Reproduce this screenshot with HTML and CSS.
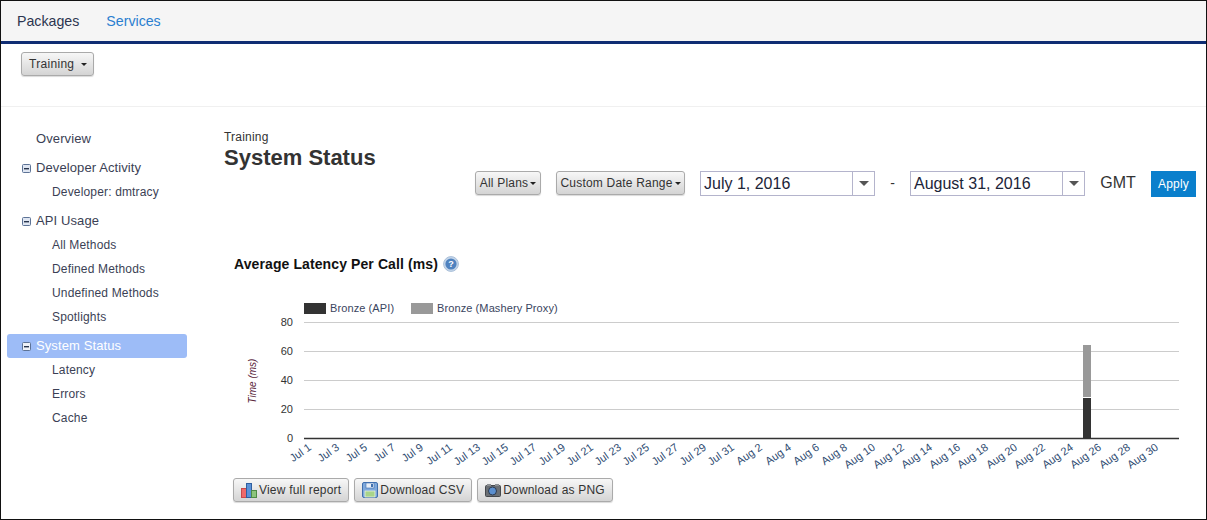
FILE: index.html
```html
<!DOCTYPE html>
<html lang="en">
<head>
    <meta charset="UTF-8">
    <title>System Status</title>
    <link rel="stylesheet" href="styles.css">
</head>
<body>
    <div class="frame">
        <!-- Top nav -->
        <nav class="top-nav">
            <a class="top-link" href="#">Packages</a>
            <a class="top-link active" href="#">Services</a>
        </nav>

        <div class="area-bar">
            <button class="btn btn-area">Training <span class="caret"></span></button>
        </div>

        <div class="page">
            <!-- Sidebar -->
            <ul class="side-nav">
                <li class="side-item plain">Overview</li>
                <li class="side-item group"><svg class="minus-box" viewBox="0 0 9 9"><rect x="0.5" y="0.5" width="8" height="8" rx="1" fill="#dfe6f2" stroke="#5d7396"/><rect x="2" y="4" width="5" height="1.4" fill="#28354d"/></svg>Developer Activity</li>
                <li class="side-sub">Developer: dmtracy</li>
                <li class="side-item group"><svg class="minus-box" viewBox="0 0 9 9"><rect x="0.5" y="0.5" width="8" height="8" rx="1" fill="#dfe6f2" stroke="#5d7396"/><rect x="2" y="4" width="5" height="1.4" fill="#28354d"/></svg>API Usage</li>
                <li class="side-sub">All Methods</li>
                <li class="side-sub">Defined Methods</li>
                <li class="side-sub">Undefined Methods</li>
                <li class="side-sub">Spotlights</li>
                <li class="side-item group current"><svg class="minus-box" viewBox="0 0 9 9"><rect x="0.5" y="0.5" width="8" height="8" rx="1" fill="#eef1f7" stroke="#5d7396"/><rect x="2" y="4" width="5" height="1.4" fill="#28354d"/></svg>System Status</li>
                <li class="side-sub">Latency</li>
                <li class="side-sub">Errors</li>
                <li class="side-sub">Cache</li>
            </ul>

            <main class="content">
                <div class="content-head">
                    <div class="title-block">
                        <div class="crumb">Training</div>
                        <h1>System Status</h1>
                    </div>
                    <div class="filters">
                        <button class="btn btn-filter">All Plans<span class="caret"></span></button>
                        <button class="btn btn-filter btn-range">Custom Date Range<span class="caret"></span></button>
                        <div class="combo"><span class="combo-value">July 1, 2016</span><span class="combo-arrow"><span class="arrow-down"></span></span></div>
                        <span class="dash">-</span>
                        <div class="combo"><span class="combo-value">August 31, 2016</span><span class="combo-arrow"><span class="arrow-down"></span></span></div>
                        <span class="zone">GMT</span>
                        <button class="btn-apply">Apply</button>
                    </div>
                </div>

                <h2 class="chart-title">Average Latency Per Call (ms)
                    <svg class="help-icon" viewBox="0 0 16 16"><circle cx="8" cy="8" r="7.4" fill="#c5d6ea" stroke="#a9bfd9"/><circle cx="8" cy="8" r="5.6" fill="#4f82bf"/><text x="8" y="11.3" text-anchor="middle" class="help-mark">?</text></svg>
                </h2>

                <!-- Chart -->
                <svg class="chart" width="982" height="180" viewBox="224 294 982 180">
                    <rect x="304" y="303" width="22" height="11" fill="#333"/>
                    <text x="330" y="312" class="legend">Bronze (API)</text>
                    <rect x="411" y="303" width="22" height="11" fill="#999"/>
                    <text x="437" y="312" class="legend">Bronze (Mashery Proxy)</text>

                    <g stroke="#ccc" stroke-width="1">
                        <line x1="304" x2="1179" y1="322.5" y2="322.5"/>
                        <line x1="304" x2="1179" y1="351.5" y2="351.5"/>
                        <line x1="304" x2="1179" y1="380.5" y2="380.5"/>
                        <line x1="304" x2="1179" y1="409.5" y2="409.5"/>
                    </g>

                    <g class="y-label" text-anchor="end">
                        <text x="293" y="326">80</text>
                        <text x="293" y="355">60</text>
                        <text x="293" y="384">40</text>
                        <text x="293" y="413">20</text>
                        <text x="293" y="442">0</text>
                    </g>
                    <text class="y-title" transform="translate(256 381) rotate(-90)" text-anchor="middle">Time (ms)</text>

                    <rect x="1083" y="345" width="8" height="52" fill="#999"/>
                    <rect x="1083" y="398" width="8" height="40" fill="#333"/>
                    <line x1="304" x2="1179" y1="438.5" y2="438.5" stroke="#333" stroke-width="1.4"/>

                    <g class="x-label" text-anchor="end">
                        <text transform="translate(312 449) rotate(-35)">Jul 1</text>
                        <text transform="translate(340 449) rotate(-35)">Jul 3</text>
                        <text transform="translate(368 449) rotate(-35)">Jul 5</text>
                        <text transform="translate(396 449) rotate(-35)">Jul 7</text>
                        <text transform="translate(424 449) rotate(-35)">Jul 9</text>
                        <text transform="translate(453 449) rotate(-35)">Jul 11</text>
                        <text transform="translate(481 449) rotate(-35)">Jul 13</text>
                        <text transform="translate(509 449) rotate(-35)">Jul 15</text>
                        <text transform="translate(537 449) rotate(-35)">Jul 17</text>
                        <text transform="translate(566 449) rotate(-35)">Jul 19</text>
                        <text transform="translate(594 449) rotate(-35)">Jul 21</text>
                        <text transform="translate(622 449) rotate(-35)">Jul 23</text>
                        <text transform="translate(650 449) rotate(-35)">Jul 25</text>
                        <text transform="translate(679 449) rotate(-35)">Jul 27</text>
                        <text transform="translate(707 449) rotate(-35)">Jul 29</text>
                        <text transform="translate(735 449) rotate(-35)">Jul 31</text>
                        <text transform="translate(763 449) rotate(-35)">Aug 2</text>
                        <text transform="translate(792 449) rotate(-35)">Aug 4</text>
                        <text transform="translate(820 449) rotate(-35)">Aug 6</text>
                        <text transform="translate(848 449) rotate(-35)">Aug 8</text>
                        <text transform="translate(876 449) rotate(-35)">Aug 10</text>
                        <text transform="translate(905 449) rotate(-35)">Aug 12</text>
                        <text transform="translate(933 449) rotate(-35)">Aug 14</text>
                        <text transform="translate(961 449) rotate(-35)">Aug 16</text>
                        <text transform="translate(989 449) rotate(-35)">Aug 18</text>
                        <text transform="translate(1018 449) rotate(-35)">Aug 20</text>
                        <text transform="translate(1046 449) rotate(-35)">Aug 22</text>
                        <text transform="translate(1074 449) rotate(-35)">Aug 24</text>
                        <text transform="translate(1102 449) rotate(-35)">Aug 26</text>
                        <text transform="translate(1131 449) rotate(-35)">Aug 28</text>
                        <text transform="translate(1159 449) rotate(-35)">Aug 30</text>
                    </g>
                </svg>

                <div class="actions">
                    <button class="btn btn-action">
                        <svg class="action-icon" viewBox="0 0 16 16"><rect x="0.5" y="6.5" width="5" height="9" fill="#ef6a6a" stroke="#c84a4a"/><rect x="5.5" y="1.5" width="5" height="14" fill="#5b92d8" stroke="#2f5f9f"/><rect x="10.5" y="8.5" width="5" height="7" fill="#8cc47c" stroke="#4f8a45"/></svg>
                        View full report
                    </button>
                    <button class="btn btn-action">
                        <svg class="action-icon" viewBox="0 0 16 16"><rect x="0.5" y="0.5" width="15" height="15" rx="1.5" fill="#7fa9dc" stroke="#3f6fae"/><rect x="4" y="1" width="8" height="5" fill="#e9eff8" stroke="#3f6fae" stroke-width="0.6"/><rect x="9" y="2" width="2" height="3" fill="#3f6fae"/><rect x="3" y="9" width="10" height="6" fill="#a8d48a" stroke="#e8f2df" stroke-width="0.8"/></svg>
                        Download CSV
                    </button>
                    <button class="btn btn-action">
                        <svg class="action-icon" viewBox="0 0 16 16"><rect x="0.5" y="3.5" width="15" height="11" rx="1" fill="#6b6f74" stroke="#45484c"/><rect x="2" y="2" width="4" height="2" fill="#8d9094"/><rect x="10" y="2" width="4" height="2" fill="#8d9094"/><circle cx="7.5" cy="9" r="4" fill="#5b8fcf" stroke="#2d3a4d"/></svg>
                        Download as PNG
                    </button>
                </div>
            </main>
        </div>
    </div>
</body>
</html>
```

FILE: styles.css
```css
html, body {
    margin: 0;
    padding: 0;
}

body {
    font-family: "Liberation Sans", Arial, sans-serif;
    color: #333;
    background-color: white;
}

.frame {
    box-sizing: border-box;
    width: 1207px;
    height: 520px;
    overflow: hidden;
    border: 1px solid #111;
}

/* Top nav */
.top-nav {
    display: flex;
    gap: 27px;
    height: 40px;
    padding-left: 16px;
    align-items: center;
    background-color: #f5f5f5;
    border-bottom: 3px solid #0f2d73;
}

.top-link {
    font-size: 14.2px;
    color: #2c3550;
    text-decoration: none;
}

.top-link.active {
    color: #2a7fd0;
}

/* Buttons */
.btn {
    font-family: inherit;
    color: #333;
    background: linear-gradient(#f7f7f7, #d4d4d4);
    border: 1px solid #aaa;
    border-radius: 3px;
    box-shadow: 0 1px 1px rgba(0, 0, 0, 0.15);
    padding: 0;
}

.caret {
    display: inline-block;
    width: 0;
    height: 0;
    margin-left: 2px;
    vertical-align: middle;
    border-left: 3px solid transparent;
    border-right: 3px solid transparent;
    border-top: 3px solid #222;
}

.area-bar {
    height: 63px;
    padding: 8px 0 0 20px;
    box-sizing: border-box;
    border-bottom: 1px solid #f0f0f0;
}

.btn-area {
    width: 73px;
    height: 24px;
    font-size: 12px;
    letter-spacing: 0.3px;
    padding-left: 1px;
}

.btn-area .caret {
    margin-left: 3px;
}

.page {
    display: flex;
}

/* Sidebar */
.side-nav {
    list-style: none;
    width: 180px;
    margin: 19px 0 0 6px;
    padding: 0;
    flex-shrink: 0;
}

.side-item {
    display: flex;
    align-items: center;
    box-sizing: border-box;
    height: 24px;
    font-size: 13px;
    letter-spacing: 0.1px;
    padding-left: 15px;
    border-radius: 3px;
    color: #3b3f55;
}

.side-item.plain {
    padding-left: 29px;
}

.side-item.group {
    margin-top: 5px;
}

.side-item.current {
    margin-top: 6px;
    margin-bottom: -1px;
    padding-bottom: 2px;
    color: white;
    background-color: #9dbcf7;
}

.minus-box {
    width: 9px;
    height: 9px;
    margin-right: 5px;
    margin-top: 2px;
}

.side-sub {
    height: 24px;
    line-height: 26px;
    font-size: 12px;
    letter-spacing: 0.16px;
    padding-left: 45px;
    color: #3b3f55;
}

/* Content */
.content {
    flex: 1;
    margin-left: 37px;
    min-width: 0;
}

.content-head {
    display: flex;
    justify-content: space-between;
    align-items: flex-end;
    height: 89px;
    padding-right: 10px;
}

.title-block {
    align-self: flex-start;
    padding-top: 23px;
}

.crumb {
    font-size: 12px;
    line-height: 14px;
    letter-spacing: 0.2px;
}

h1 {
    margin: 0;
    font-size: 22px;
    line-height: 28px;
    font-weight: bold;
    color: #333;
}

.filters {
    display: flex;
    align-items: center;
}

.btn-filter {
    height: 24px;
    width: 66px;
    font-size: 12px;
    letter-spacing: 0.2px;
    margin-right: 15px;
}

.btn-range {
    width: 129px;
}

.combo {
    display: flex;
    box-sizing: border-box;
    width: 175px;
    height: 25px;
    border: 1px solid #b4b4cc;
    background-color: white;
}

.combo-value {
    flex: 1;
    padding-left: 3px;
    font-size: 16px;
    line-height: 23px;
    color: #1c2438;
}

.combo-arrow {
    display: flex;
    align-items: center;
    justify-content: center;
    width: 21px;
    border-left: 1px solid #b4b4cc;
}

.arrow-down {
    width: 0;
    height: 0;
    border-left: 5px solid transparent;
    border-right: 5px solid transparent;
    border-top: 5px solid #555;
}

.dash {
    width: 35px;
    text-align: center;
    font-size: 14px;
}

.zone {
    width: 66px;
    text-align: center;
    font-size: 16px;
}

.btn-apply {
    width: 45px;
    height: 26px;
    margin-top: 1px;
    margin-bottom: -1px;
    padding: 0;
    border: none;
    background-color: #0a7fcc;
    color: white;
    font-family: inherit;
    font-size: 12px;
    letter-spacing: 0.2px;
}

.chart-title {
    display: flex;
    align-items: center;
    gap: 5px;
    margin: 59px 0 0 10px;
    height: 18px;
    font-size: 14px;
    letter-spacing: 0.1px;
    font-weight: bold;
    color: #111;
}

.help-icon {
    width: 16px;
    height: 16px;
}

.help-mark {
    font-size: 9px;
    font-weight: bold;
    fill: white;
}

/* Chart */
.chart {
    display: block;
    margin-top: 21px;
    font-family: "Liberation Sans", Arial, sans-serif;
}

.legend {
    font-size: 11px;
    letter-spacing: 0.1px;
    fill: #3a4560;
}

.y-label {
    font-size: 11px;
    fill: #333;
}

.y-title {
    font-size: 10px;
    font-style: italic;
    fill: #5a1f3a;
}

.x-label {
    font-size: 11px;
    fill: #2d4a70;
}

/* Action buttons */
.actions {
    display: flex;
    gap: 5px;
    margin: 4px 0 0 9px;
}

.btn-action {
    display: flex;
    align-items: center;
    gap: 2px;
    height: 24px;
    padding: 0 7px;
    font-size: 12px;
    letter-spacing: 0.2px;
    white-space: nowrap;
}

.action-icon {
    width: 16px;
    height: 16px;
}
```
